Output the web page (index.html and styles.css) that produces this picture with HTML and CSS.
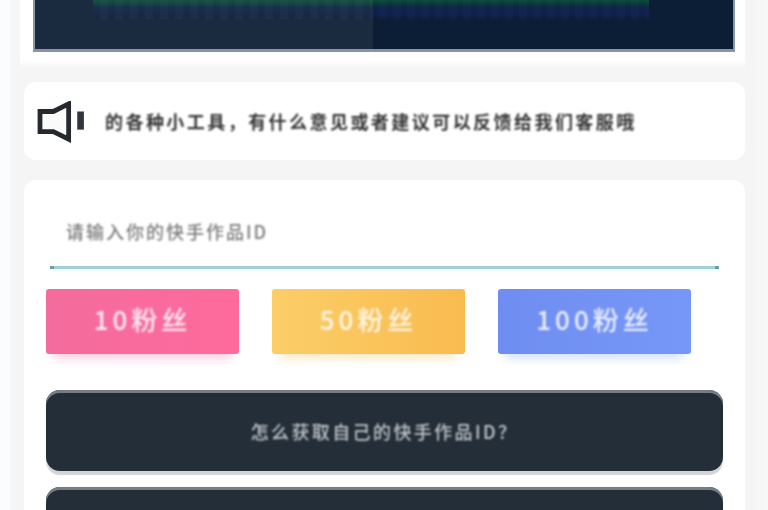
FILE: index.html
```html
<!DOCTYPE html>
<html lang="zh-CN">
<head>
<meta charset="utf-8">
<title>快手作品</title>
<link rel="stylesheet" href="styles.css">
</head>
<body>
<div class="page">
  <div class="hero">
    <div class="banner">
      <div class="banner-half banner-left"><div class="band"></div></div>
      <div class="banner-half banner-right"><div class="band"></div></div>
    </div>
  </div>
  <section class="notice">
    <svg class="speaker" viewBox="0 0 50 44" aria-hidden="true">
      <path d="M3 11H17L33 3V40L17 32H3Z" fill="#fafafa" stroke="#25282c" stroke-width="5"/>
      <rect x="42" y="11" width="7" height="19" fill="#33373c"/>
    </svg>
    <span class="notice-text">的各种小工具，有什么意见或者建议可以反馈给我们客服哦</span>
  </section>
  <section class="panel">
    <div class="field"><span class="placeholder">请输入你的快手作品ID</span></div>
    <div class="tiers">
      <div class="tier tier-pink"><span class="tier-label">10粉丝</span></div>
      <div class="tier tier-gold"><span class="tier-label">50粉丝</span></div>
      <div class="tier tier-blue"><span class="tier-label">100粉丝</span></div>
    </div>
    <div class="action"><span class="action-label">怎么获取自己的快手作品ID？</span></div>
    <div class="action"></div>
  </section>
</div>
</body>
</html>
```
FILE: styles.css
```css
* { box-sizing: border-box; }
html, body { margin: 0; height: 100%; }
body {
  background: #fbfcfd;
  overflow: hidden;
  font-family: "Noto Sans CJK SC", "Liberation Sans", sans-serif;
}
.page {
  width: 758px;
  height: 510px;
  margin-left: 10px;
  background: linear-gradient(90deg, #f8f8f8 0, #f5f5f5 8px, #f5f5f5 740px, #f8f8f8 100%);
  padding: 0 23px 0 14px;
  overflow: hidden;
}
.hero {
  height: 72px;
  margin-left: -4px;
  padding: 0 10px 0 13px;
  background: linear-gradient(180deg, #fff 0, #fff 60px, #f6f5f4 68px, #f6f5f4 100%);
}
.banner {
  display: flex;
  height: 52px;
  border-left: 2px solid #8b97a3;
  border-right: 2px solid #8b97a3;
  border-bottom: 3px solid #8b95a0;
  filter: blur(0.6px);
}
.banner-half { position: relative; }
.banner-left { width: 338px; background: #1a2b3f; }
.banner-right { flex: 1; background: #0c1d36; }
.band { height: 19px; }
.banner-left .band {
  margin-left: 58px;
  background:
    linear-gradient(180deg, rgba(22, 98, 72, .7) 0, rgba(22, 98, 72, .45) 4px, rgba(26, 52, 90, .5) 7px, rgba(28, 40, 82, .55) 15px, rgba(28, 40, 82, 0) 19px),
    repeating-linear-gradient(90deg, rgba(0, 0, 0, .07) 0 7px, rgba(80, 130, 150, .07) 7px 15px);
}
.banner-right .band {
  margin-right: 84px;
  background:
    linear-gradient(180deg, rgba(12, 92, 62, .75) 0, rgba(12, 92, 62, .4) 4px, rgba(18, 44, 100, .5) 7px, rgba(20, 36, 92, .55) 15px, rgba(20, 36, 92, 0) 19px),
    repeating-linear-gradient(90deg, rgba(0, 0, 0, .08) 0 6px, rgba(60, 110, 150, .06) 6px 14px);
}
.notice {
  height: 78px;
  margin-top: 10px;
  display: flex;
  align-items: center;
  background: #fff;
  border-radius: 12px;
  padding-left: 12px;
}
.speaker { width: 50px; height: 42px; flex: none; margin-top: 2px; filter: blur(0.7px); }
.notice-text {
  margin-left: 19px;
  font-size: 18px;
  letter-spacing: 2.45px;
  color: #333;
  font-weight: 700;
  white-space: nowrap;
  filter: blur(1px);
}
.panel {
  margin-top: 20px;
  height: 340px;
  background: #fff;
  border-radius: 12px 12px 0 0;
  padding: 30px 22px 0;
}
.field {
  position: relative;
  margin: 0 4px 0 4px;
  height: 59px;
  padding: 8px 0 0 16px;
  border-bottom: 3px solid #a3d0d6;
  box-shadow: 0 4px 3px -2px #e6f8fb;
}
.field::before,
.field::after {
  content: "";
  position: absolute;
  bottom: -3px;
  width: 4px;
  height: 3px;
  background: #6f9ea1;
}
.field::before { left: 0; }
.field::after { right: 0; }
.placeholder {
  display: block;
  font-size: 18px;
  font-weight: 500;
  letter-spacing: 2px;
  color: #7c7c7c;
  line-height: 26px;
  filter: blur(1px);
}
.tiers {
  display: flex;
  justify-content: space-between;
  width: 645px;
  margin-top: 20px;
}
.tier {
  width: 193px;
  height: 65px;
  border-radius: 3px;
  display: flex;
  align-items: center;
  justify-content: center;
}
.tier-label {
  color: rgba(255, 255, 255, .85);
  font-size: 26px;
  font-weight: 500;
  letter-spacing: 4px;
  line-height: 30px;
  margin-bottom: 5px;
  filter: blur(1.1px);
}
.tier-pink { background: linear-gradient(90deg, #f36c9c, #ff6a9c); box-shadow: 0 12px 10px -8px #fbc6d9; }
.tier-gold { background: linear-gradient(90deg, #fbce68, #f9bb50); box-shadow: 0 12px 10px -8px #fde6bd; }
.tier-blue { background: linear-gradient(90deg, #6f8df0, #7697f8); box-shadow: 0 12px 10px -8px #cfdcfb; }
.action {
  width: 677px;
  height: 81px;
  margin-top: 36px;
  background: #232e39;
  border-radius: 14px;
  box-shadow: inset 0 3px 0 #777d80, 0 4px 1px #d2d4d6;
  display: flex;
  align-items: center;
  justify-content: center;
}
.action-label {
  color: #c4c8cc;
  font-size: 18px;
  font-weight: 500;
  letter-spacing: 2.4px;
  line-height: 26px;
  filter: blur(0.9px);
}
.action + .action { margin-top: 16px; }
```
